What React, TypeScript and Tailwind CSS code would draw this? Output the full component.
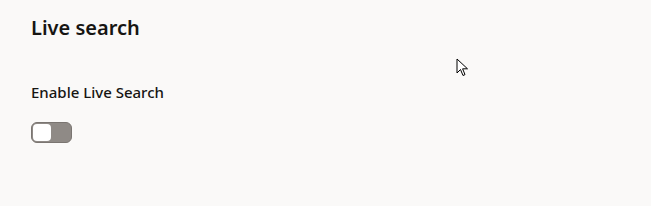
import { useState } from "react";

export default function App() {
  const [on, setOn] = useState(false);

  return (
    <div
      className="relative h-[206px] w-[651px] overflow-hidden bg-[#faf9f8] text-[#161513]"
      style={{ fontFamily: '"Noto Sans", "Open Sans", sans-serif' }}
    >
      <div className="flex flex-col px-[31px] pt-[14px]">
        <h2 className="text-[20px] font-semibold leading-[28px]">Live search</h2>
        <div className="mt-[40px] text-[15px] font-medium leading-[20px]">Enable Live Search</div>
        <button
          type="button"
          role="switch"
          aria-checked={on}
          onClick={() => setOn(!on)}
          className="mt-[20px] flex h-[21px] w-[41px] items-center rounded-[6px] border border-[#7a7571] bg-[#8f8a86] p-px"
        >
          <span className="h-[17px] w-[18px] rounded-[4px] bg-white" />
        </button>
      </div>

      <svg
        className="absolute left-[456px] top-[58px]"
        width="13"
        height="20"
        viewBox="0 0 13 20"
      >
        <path
          d="M1 1 L1 15 L4.5 11.5 L7 17.5 L9 16.6 L6.6 10.8 L11.5 10.8 Z"
          fill="#fff"
          stroke="#000"
          strokeWidth="1"
          strokeLinejoin="round"
        />
      </svg>
    </div>
  );
}
